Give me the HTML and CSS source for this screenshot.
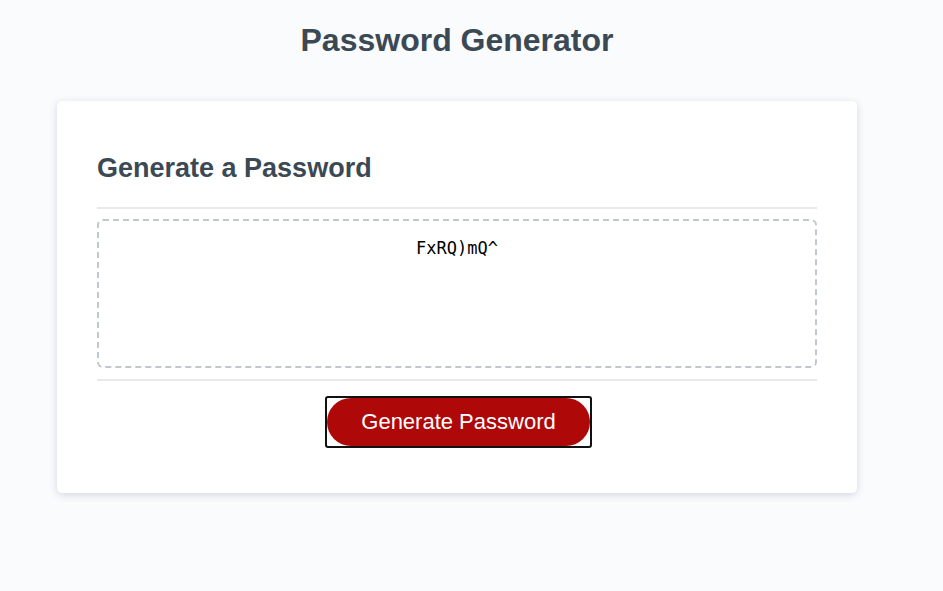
FILE: index.html
```html
<!DOCTYPE html>
<html lang="en">
<head>
<meta charset="UTF-8">
<title>Password Generator</title>
<link rel="stylesheet" href="styles.css">
</head>
<body>
  <div class="wrapper">
    <header class="page-header">
      <h1>Password Generator</h1>
    </header>
    <div class="card">
      <div class="card-header">
        <h2>Generate a Password</h2>
      </div>
      <div class="card-body">
        <textarea readonly id="password" class="password" aria-label="Generated Password">FxRQ)mQ^</textarea>
      </div>
      <div class="card-footer">
        <span class="focus-ring"><button id="generate" class="btn">Generate Password</button></span>
      </div>
    </div>
  </div>
</body>
</html>
```

FILE: styles.css
```css
* { box-sizing: border-box; }

html, body { height: 100%; }

body {
  margin: 8px;
  font-family: "Liberation Sans", Arial, sans-serif;
  background-color: #f9fbfd;
}

.wrapper {
  width: 800px;
  margin-left: 49px;
}

.page-header h1 {
  margin: 14px 0 42px;
  font-size: 32px;
  line-height: 37px;
  font-weight: bold;
  text-align: center;
  color: hsl(206, 17%, 28%);
}

.card {
  background-color: #fff;
  border-radius: 5px;
  box-shadow: rgba(0, 0, 59, 0.15) 0px 2px 8px 0px;
  padding: 0 40px 45px;
}

.card-header {
  padding-top: 52px;
}

.card-header h2 {
  margin: 0 0 23px;
  font-size: 27px;
  line-height: 31px;
  color: hsl(206, 17%, 28%);
}

.card-header::after,
.card-body::after {
  content: "";
  display: block;
  width: 100%;
  height: 2px;
  background: #e7e9eb;
}

.card-body::after {
  margin-top: 11px;
}

.password {
  display: block;
  width: 100%;
  height: 149px;
  margin-top: 10px;
  padding: 17px 10px;
  border: 2px dashed #c0c7cf;
  border-radius: 6px;
  resize: none;
  font-family: "DejaVu Sans Mono", "Liberation Mono", monospace;
  font-size: 17px;
  line-height: 20px;
  text-align: center;
  color: #000;
  background: #fff;
  outline: none;
}

.card-footer {
  padding-top: 15px;
  text-align: center;
  line-height: 0;
}

.focus-ring {
  display: inline-block;
  border: 2px solid #111;
  border-radius: 3px;
  line-height: 0;
  margin-left: 3px;
}

.btn {
  border: none;
  background-color: #af0808;
  border-radius: 25px;
  color: #fff;
  font-family: "Liberation Sans", Arial, sans-serif;
  font-size: 22px;
  line-height: 22px;
  padding: 13px 34px 13px;
  margin: 0;
  height: 48px;
  cursor: pointer;
}
```
